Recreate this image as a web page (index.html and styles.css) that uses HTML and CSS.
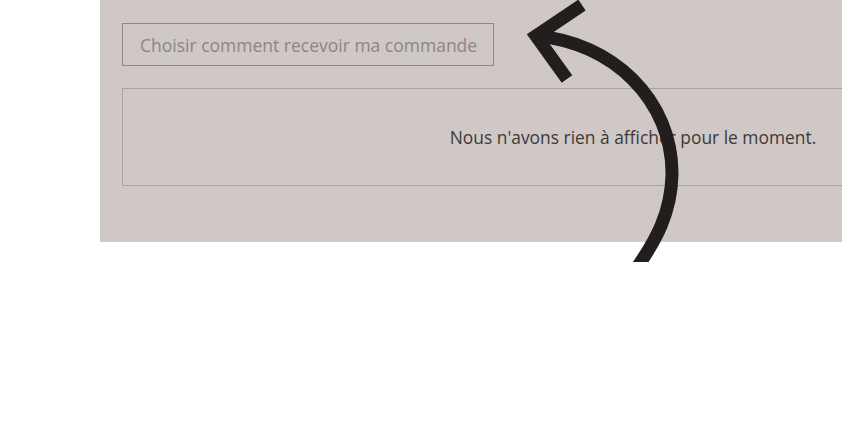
FILE: index.html
```html
<!DOCTYPE html>
<html lang="fr">
<head>
<meta charset="utf-8">
<title>Commande</title>
<link rel="stylesheet" href="styles.css">
</head>
<body>
<div class="page">
  <section class="panel">
    <div class="choice">Choisir comment recevoir ma commande</div>
    <div class="empty">
      <p class="empty-text">Nous n'avons rien à afficher pour le moment.</p>
    </div>
  </section>
  <svg class="arrow" width="842" height="262" viewBox="0 0 842 262" xmlns="http://www.w3.org/2000/svg">
    <g fill="none" stroke="#221e1e" stroke-width="13">
      <path d="M536 36 C612 42 673 100 672 175 C671 213 656 240 638 266"/>
      <path d="M582 5 L536 36 L567 79" stroke-linejoin="miter"/>
    </g>
  </svg>
</div>
</body>
</html>
```

FILE: styles.css
```css
html, body {
  margin: 0;
  padding: 0;
  background: #ffffff;
  overflow: hidden;
}

body {
  width: 842px;
  height: 445px;
  font-family: "Open Sans", "Noto Sans", sans-serif;
}

.page {
  position: relative;
  width: 842px;
  height: 445px;
  overflow: hidden;
}

.panel {
  margin-left: 100px;
  height: 242px;
  box-sizing: border-box;
  background: #cfc8c6;
  padding: 23px 0 0 22px;
  overflow: hidden;
}

.choice {
  box-sizing: border-box;
  width: 372px;
  height: 43px;
  border: 1px solid #8e8584;
  padding-left: 17px;
  display: flex;
  align-items: center;
  font-size: 17.5px;
  color: #8b8685;
}

.empty {
  box-sizing: border-box;
  margin-top: 22px;
  width: 1022px;
  height: 98px;
  border: 1px solid #aaa2a0;
  display: flex;
  align-items: center;
  justify-content: center;
}

.empty-text {
  margin: 0;
  font-size: 17.4px;
  color: #3d3a39;
}

.arrow {
  position: absolute;
  left: 0;
  top: 0;
  display: block;
}
```
